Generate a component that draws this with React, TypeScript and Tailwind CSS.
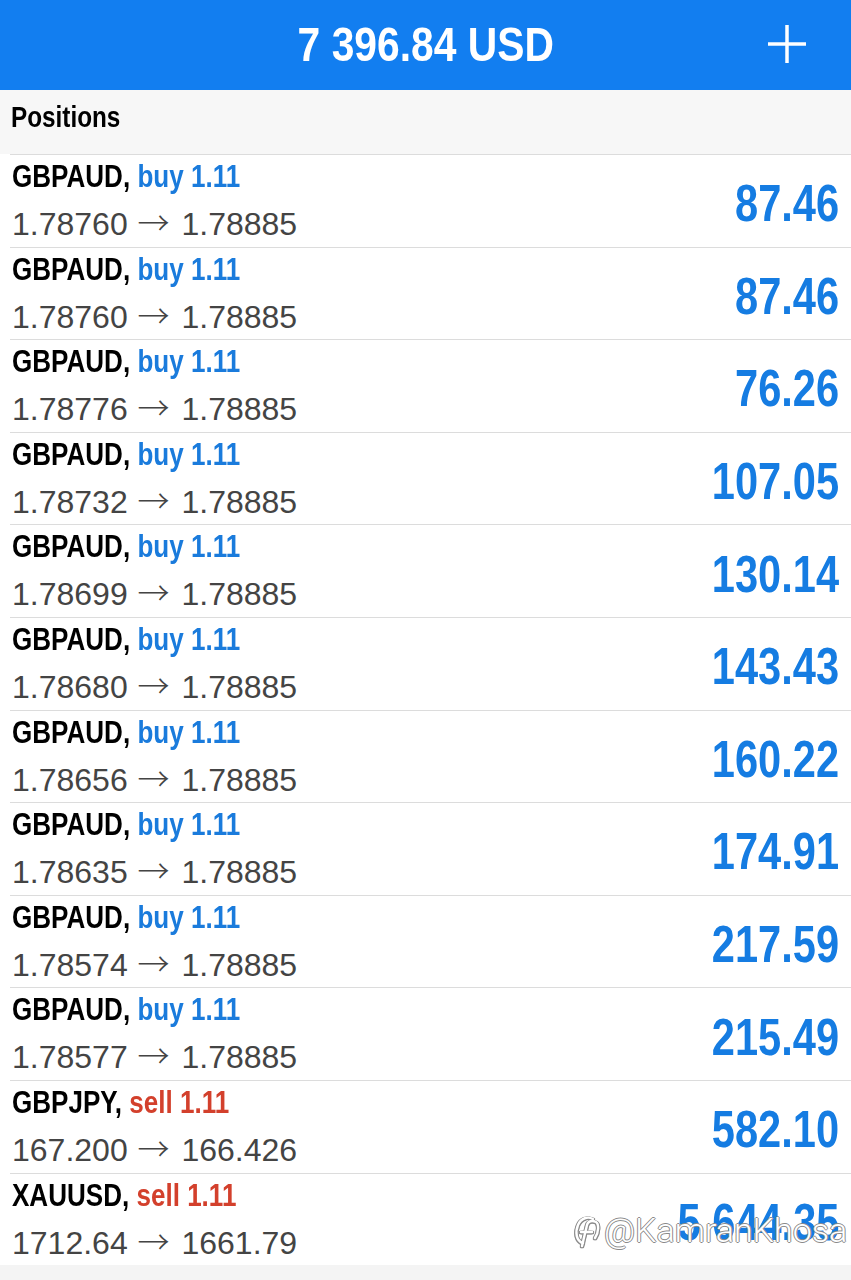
type Position = {
  symbol: string
  side: 'buy' | 'sell'
  open: string
  current: string
  profit: string
}

const positions: Position[] = [
  { symbol: 'GBPAUD', side: 'buy', open: '1.78760', current: '1.78885', profit: '87.46' },
  { symbol: 'GBPAUD', side: 'buy', open: '1.78760', current: '1.78885', profit: '87.46' },
  { symbol: 'GBPAUD', side: 'buy', open: '1.78776', current: '1.78885', profit: '76.26' },
  { symbol: 'GBPAUD', side: 'buy', open: '1.78732', current: '1.78885', profit: '107.05' },
  { symbol: 'GBPAUD', side: 'buy', open: '1.78699', current: '1.78885', profit: '130.14' },
  { symbol: 'GBPAUD', side: 'buy', open: '1.78680', current: '1.78885', profit: '143.43' },
  { symbol: 'GBPAUD', side: 'buy', open: '1.78656', current: '1.78885', profit: '160.22' },
  { symbol: 'GBPAUD', side: 'buy', open: '1.78635', current: '1.78885', profit: '174.91' },
  { symbol: 'GBPAUD', side: 'buy', open: '1.78574', current: '1.78885', profit: '217.59' },
  { symbol: 'GBPAUD', side: 'buy', open: '1.78577', current: '1.78885', profit: '215.49' },
  { symbol: 'GBPJPY', side: 'sell', open: '167.200', current: '166.426', profit: '582.10' },
  { symbol: 'XAUUSD', side: 'sell', open: '1712.64', current: '1661.79', profit: '5 644.35' },
]

// bold Arial-width face, squeezed to the condensed look of the app font
const bold = "font-['Liberation_Sans',Arial,sans-serif] font-bold whitespace-nowrap inline-block"

function PositionRow({ p }: { p: Position }) {
  return (
    <div className="h-[92.6px] pl-[10px]">
      <div className="h-full border-t border-[#dcdcdc] flex justify-between pr-[12px]">
        <div className="pt-1 pl-[2px]">
          <div className={`${bold} origin-left scale-x-[0.84] text-[31px] leading-[36px] text-black`}>
            {p.symbol},{' '}
            <span className={p.side === 'buy' ? 'text-[#1a7bdc]' : 'text-[#d3402c]'}>
              {p.side} 1.11
            </span>
          </div>
          <div className="font-['Liberation_Sans',Arial,sans-serif] text-[32px] leading-[52px] text-[#444444] whitespace-nowrap">
            {p.open}{' '}
            <span className="font-['Noto_Sans_CJK_JP',sans-serif] font-light ml-[1px] mr-[3px]">→</span>{' '}
            {p.current}
          </div>
        </div>
        <div className="self-center pt-[5px]">
          <div className={`${bold} origin-right scale-x-[0.8] text-[52px] leading-none text-[#157ce2]`}>
            {p.profit}
          </div>
        </div>
      </div>
    </div>
  )
}

export default function App() {
  return (
    <div className="relative w-[851px] h-[1280px] overflow-hidden bg-white">
      <header className="h-[90px] bg-[#127ef0] flex items-center justify-center relative">
        <span className={`${bold} origin-center scale-x-[0.85] text-[48px] leading-none text-white`}>
          7 396.84 USD
        </span>
        <svg
          className="absolute left-[768px] top-[25px]"
          width="38"
          height="38"
          viewBox="0 0 38 38"
          stroke="white"
          strokeWidth="3.5"
        >
          <line x1="19" y1="0" x2="19" y2="38" />
          <line x1="0" y1="19" x2="38" y2="19" />
        </svg>
      </header>

      <div className="h-[64px] bg-[#f7f7f7] pl-[11px] pt-[9px]">
        <span className={`${bold} origin-left scale-x-[0.81] text-[30px] leading-[36px] text-black`}>
          Positions
        </span>
      </div>

      {positions.map((p, i) => (
        <PositionRow key={i} p={p} />
      ))}

      <div className="h-[20px] bg-[#f4f4f4]" />

      {/* watermark laid over the last row */}
      <div className="absolute left-[574px] top-[1212px] flex items-center gap-[4px] text-white font-['Roboto','Liberation_Sans',sans-serif] font-light text-[34px] leading-none [text-shadow:1px_0_0_#8a8a8a,-1px_0_0_#8a8a8a,0_1px_0_#8a8a8a,0_-1px_0_#8a8a8a]">
        <svg width="26" height="36" viewBox="0 0 26 36" fill="none" className="[filter:drop-shadow(1px_0_0_#8a8a8a)_drop-shadow(-1px_0_0_#8a8a8a)_drop-shadow(0_1px_0_#8a8a8a)]">
          <path d="M9 31 C2 29 1 20 4 13 C7 6 14 4 19 7" stroke="white" strokeWidth="2.4" strokeLinecap="round" />
          <path d="M8 34 L13 13 C14 9 18 8 22 10 C25 12 25 20 21 26" stroke="white" strokeWidth="2.4" strokeLinecap="round" />
          <path d="M7 20 L18 20" stroke="white" strokeWidth="2.4" strokeLinecap="round" />
        </svg>
        <span>@KamranKhosa</span>
      </div>
    </div>
  )
}
